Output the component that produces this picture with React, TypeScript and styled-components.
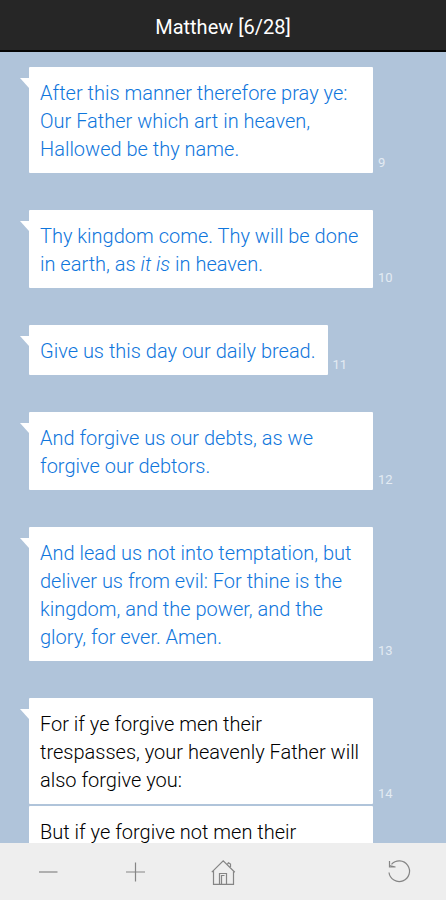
import React from "react";
import styled, { createGlobalStyle } from "styled-components";

const GlobalStyle = createGlobalStyle`
  *, *::before, *::after { box-sizing: border-box; }
  body { margin: 0; font-family: Roboto, sans-serif; background: #b0c4da; }
`;

const Screen = styled.div`
  display: flex;
  flex-direction: column;
  height: 100vh;
`;

const Header = styled.header`
  flex: none;
  padding: 13px 16px 9px;
  background: #262626;
  border-bottom: 2px solid #050505;
  text-align: center;
`;

const Title = styled.h1`
  margin: 0;
  color: #fff;
  font-size: 20px;
  line-height: 28px;
  font-weight: 400;
`;

const Chapter = styled.main`
  flex: 1;
  min-height: 0;
  overflow-y: auto;
  scrollbar-width: none;
  display: flex;
  flex-direction: column;
  gap: 37px;
  padding: 15px 29px;
`;

const Group = styled.section`
  flex: none;
  display: flex;
  flex-direction: column;
  gap: 2px;
`;

const Verse = styled.div`
  display: flex;
  align-items: flex-end;
  gap: 5px;
`;

const Bubble = styled.p<{ $spoken: boolean; $tail: boolean }>`
  position: relative;
  margin: 0;
  max-width: calc(100% - 44px);
  padding: 12px 12px 10px 11px;
  border-radius: 1px;
  background: #fff;
  color: ${(p) => (p.$spoken ? "#0f76dc" : "#000")};
  font-size: 20px;
  line-height: 28px;
  font-weight: 300;

  &::before {
    content: ${(p) => (p.$tail ? '""' : "none")};
    position: absolute;
    top: 11px;
    left: -9px;
    border-top: 10px solid #fff;
    border-left: 9px solid transparent;
  }
`;

const VerseNumber = styled.span`
  padding-bottom: 2px;
  color: #e3ebf3;
  font-size: 13px;
  line-height: 16px;
`;

const Toolbar = styled.nav`
  flex: none;
  display: grid;
  grid-template-columns: repeat(5, 1fr);
  height: 57px;
  padding: 0 4px;
  background: #eee;
`;

const ToolButton = styled.button<{ $column?: number }>`
  display: flex;
  align-items: center;
  justify-content: center;
  grid-column: ${(p) => p.$column ?? "auto"};
  padding: 0;
  border: 0;
  background: none;
  color: #858585;
  cursor: pointer;
`;

const Icon = styled.svg`
  width: 28px;
  height: 28px;
  fill: none;
  stroke: currentColor;
  stroke-width: 1.2;
`;

type VerseData = { number: number; text: React.ReactNode };

const groups: { spoken: boolean; verses: VerseData[] }[] = [
  {
    spoken: true,
    verses: [
      {
        number: 9,
        text: "After this manner therefore pray ye: Our Father which art in heaven, Hallowed be thy name.",
      },
    ],
  },
  {
    spoken: true,
    verses: [
      {
        number: 10,
        text: (
          <>
            Thy kingdom come. Thy will be done in earth, as <em>it is</em> in heaven.
          </>
        ),
      },
    ],
  },
  { spoken: true, verses: [{ number: 11, text: "Give us this day our daily bread." }] },
  {
    spoken: true,
    verses: [{ number: 12, text: "And forgive us our debts, as we forgive our debtors." }],
  },
  {
    spoken: true,
    verses: [
      {
        number: 13,
        text: "And lead us not into temptation, but deliver us from evil: For thine is the kingdom, and the power, and the glory, for ever. Amen.",
      },
    ],
  },
  {
    spoken: false,
    verses: [
      {
        number: 14,
        text: "For if ye forgive men their trespasses, your heavenly Father will also forgive you:",
      },
      {
        number: 15,
        text: "But if ye forgive not men their trespasses, neither will your Father forgive your trespasses.",
      },
    ],
  },
];

export default function App() {
  return (
    <Screen>
      <GlobalStyle />
      <Header>
        <Title>Matthew [6/28]</Title>
      </Header>
      <Chapter>
        {groups.map((group) => (
          <Group key={group.verses[0].number}>
            {group.verses.map((verse, index) => (
              <Verse key={verse.number}>
                <Bubble $spoken={group.spoken} $tail={index === 0}>
                  {verse.text}
                </Bubble>
                <VerseNumber>{verse.number}</VerseNumber>
              </Verse>
            ))}
          </Group>
        ))}
      </Chapter>
      <Toolbar aria-label="Reader controls">
        <ToolButton type="button" aria-label="Smaller text">
          <Icon viewBox="0 0 28 28">
            <path d="M5 14H23.5" />
          </Icon>
        </ToolButton>
        <ToolButton type="button" aria-label="Larger text">
          <Icon viewBox="0 0 28 28">
            <path d="M5 14H24M14.5 4.5V23.5" />
          </Icon>
        </ToolButton>
        <ToolButton type="button" aria-label="Home">
          <Icon viewBox="0 0 28 28">
            <path d="M2.8 14.2L14.2 2.8L25.8 14.2M4.5 12.8V26.4H24.5V12.8M10.5 26.2V15.5H17.5V26.2M12.5 26V17.5H15.5M18.5 6L19.5 4.8L21.5 6V9" />
          </Icon>
        </ToolButton>
        <ToolButton type="button" aria-label="Reload" $column={5}>
          <Icon viewBox="0 0 28 28">
            <path d="M7.5 6.4A10.3 10.3 0 1 1 5 14.5" />
            <path d="M5.5 3V9H11.5L5.5 7.5" />
          </Icon>
        </ToolButton>
      </Toolbar>
    </Screen>
  );
}
